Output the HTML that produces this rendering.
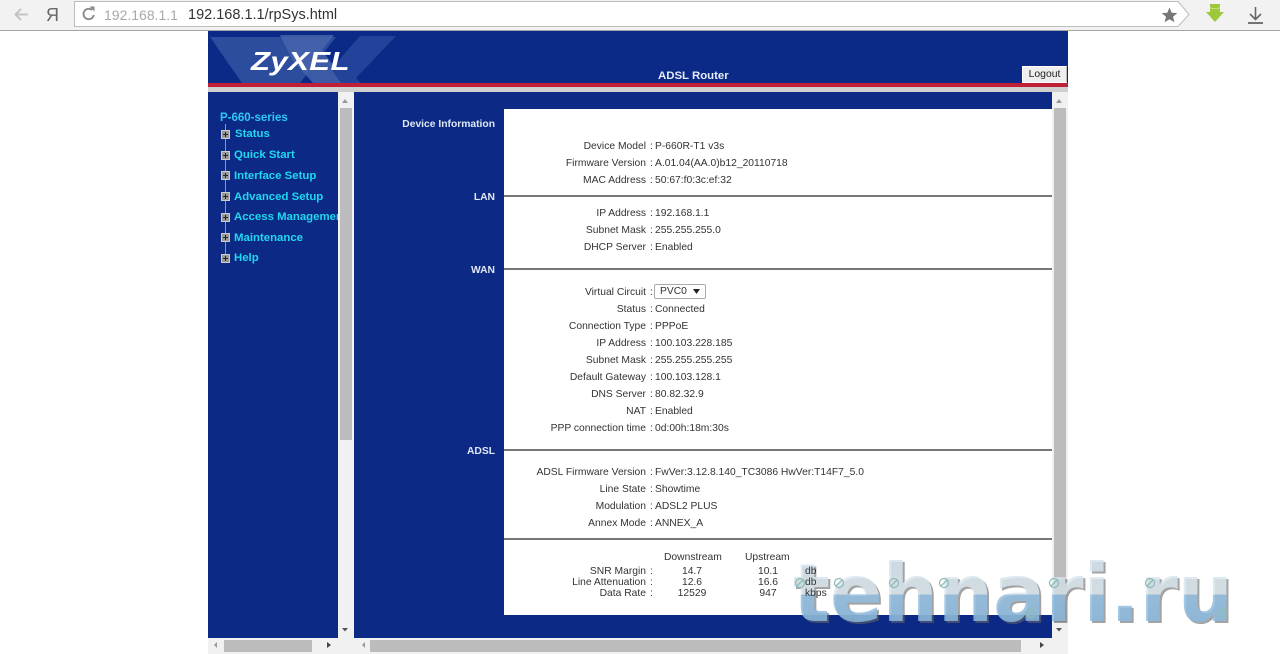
<!DOCTYPE html>
<html><head><meta charset="utf-8">
<style>
html,body{margin:0;padding:0;background:#fff;}
body{width:1280px;height:654px;overflow:hidden;position:relative;font-family:"Liberation Sans",Arial,sans-serif;}
.a{position:absolute;}
.l,.v,.c,.cc{position:absolute;margin-top:1px;font-size:10.3px;line-height:12px;color:#333;white-space:nowrap;}
.l{right:634px;text-align:right;}
.v{left:655px;}
.c{left:650px;}
.cc{text-align:center;}
.s{position:absolute;margin-top:2px;right:785px;font-size:10.3px;line-height:12px;font-weight:bold;color:#dfe6f5;white-space:nowrap;}
.m{position:absolute;margin-top:1px;left:234px;font-size:11.4px;line-height:13px;font-weight:bold;color:#1fd8f0;white-space:nowrap;}
.p{position:absolute;left:221px;width:7px;height:7px;background:#999;border:1px solid #ccc;}
.p:before{content:"";position:absolute;left:1px;top:3px;width:5px;height:1px;background:#222;}
.p:after{content:"";position:absolute;left:3px;top:1px;width:1px;height:5px;background:#222;}
.hr{position:absolute;left:504px;width:548px;height:2px;background:#777;}
</style></head>
<body>
<!-- toolbar -->
<div class="a" style="left:0;top:0;width:1280px;height:30px;background:#f2f2f2;border-bottom:1px solid #a5a5a5;"></div>
<svg class="a" style="left:0;top:0" width="74" height="30"><path d="M28 14.500H16M21 9l-5.500 5.500L21 20" fill="none" stroke="#c4c4c4" stroke-width="2"/></svg>
<div class="a" style="left:46px;top:5px;font-size:18px;line-height:20px;color:#666;">Я</div>
<svg class="a" style="left:70px;top:0" width="1130" height="30"><path d="M4.500 1.500H1108L1119 14.500 1108 26.500H4.500z" fill="#fff" stroke="#bdbdbd"/><path d="M22 10a5.200 5.200 0 1 0 1.800 5" fill="none" stroke="#888" stroke-width="1.800"/><path d="M19.500 6.500h5v5z" fill="#888"/></svg>
<div class="a" style="left:104px;top:7px;font-size:14px;line-height:17px;color:#a8a8a8;">192.168.1.1</div>
<div class="a" style="left:188px;top:7px;font-size:14.500px;line-height:17px;color:#333;">192.168.1.1/rpSys.html</div>
<svg class="a" style="left:1160px;top:6px" width="18" height="18"><path d="M9.500 1.500l2.200 5.200 5.600.4-4.300 3.600 1.400 5.500-4.900-3-4.900 3 1.400-5.500-4.300-3.600 5.600-.4z" fill="#777"/></svg>
<svg class="a" style="left:1203px;top:3px" width="24" height="22"><path d="M7 1h10v3l-1 1h-8l-1-1zM7 6h10v3h4l-9 10-9-10h4z" fill="#9cc83a"/><path d="M7 5.500h10" stroke="#c6e070" stroke-width="1"/></svg>
<svg class="a" style="left:1245px;top:5px" width="22" height="20"><path d="M10.500 2v12M5 9l5.500 5.500L16 9" fill="none" stroke="#666" stroke-width="1.600"/><path d="M3 18h15" stroke="#666" stroke-width="1.800"/></svg>

<!-- header -->
<div class="a" style="left:208px;top:31px;width:860px;height:52px;background:#0b2a87;"></div>
<svg class="a" style="left:208px;top:31px" width="200" height="52"><path d="M2 6H128L92 52H34z" fill="#2c4c9e"/><path d="M72 4h54l-12 15 24 33H105L85 30z" fill="#4a66ae" opacity=".8"/><path d="M152 5h36l-40 42 5 5h-20l-10-14z" fill="#23439a"/></svg>
<div class="a" style="left:251px;top:46px;font-size:26px;line-height:30px;font-weight:bold;font-style:italic;color:#fff;letter-spacing:.3px;transform-origin:0 0;transform:scaleX(1.2);">ZyXEL</div>
<div class="a" style="left:658px;top:70px;font-size:11.400px;line-height:13px;font-weight:bold;color:#e8ecf8;">ADSL Router</div>
<div class="a" style="left:208px;top:83px;width:860px;height:4px;background:#c01f38;"></div>
<div class="a" style="left:208px;top:87px;width:860px;height:5px;background:#cfcfcf;"></div>
<div class="a" style="left:1022px;top:66px;width:45px;height:17px;background:#eee;border:1px solid #fff;border-right-color:#bbb;box-sizing:border-box;font-size:10.400px;line-height:16px;text-align:center;color:#222;">Logout</div>

<!-- left frame -->
<div class="a" style="left:208px;top:92px;width:130px;height:546px;background:#0c2a85;"></div>
<div class="a" style="left:338px;top:92px;width:16px;height:546px;background:#f1f1f1;"></div>
<div class="a" style="left:340px;top:108px;width:12px;height:332px;background:#bcbcbc;"></div>
<div class="a" style="left:208px;top:638px;width:146px;height:16px;background:#f1f1f1;"></div>
<div class="a" style="left:224px;top:640px;width:88px;height:12px;background:#bcbcbc;"></div>
<svg class="a" style="left:208px;top:92px" width="146" height="562">
<path d="M134 11l3-4 3 4z" fill="#999"/><path d="M134 536l3 3.500 3-3.500z" fill="#555"/><path d="M9 550l-3 3 3 3z" fill="#999"/><path d="M119 550l4 3-4 3z" fill="#444"/></svg>

<div class="a" style="left:220px;top:111px;font-size:11.500px;line-height:14px;font-weight:bold;color:#2fc8f5;">P-660-series</div>
<div class="a" style="left:225px;top:124px;width:1px;height:134px;background:#8899bb;"></div>
<div class="p" style="top:130px"></div><div class="m" style="top:127px;left:235px">Status</div>
<div class="p" style="top:151px"></div><div class="m" style="top:148px">Quick Start</div>
<div class="p" style="top:171px"></div><div class="m" style="top:169px">Interface Setup</div>
<div class="p" style="top:192px"></div><div class="m" style="top:190px">Advanced Setup</div>
<div class="p" style="top:213px"></div><div class="a" style="left:234px;top:210px;width:104px;overflow:hidden;height:16px;"><div class="m" style="left:0;top:0">Access Management</div></div>
<div class="p" style="top:233px"></div><div class="m" style="top:231px">Maintenance</div>
<div class="p" style="top:254px"></div><div class="m" style="top:251px">Help</div>

<!-- right frame -->
<div class="a" style="left:354px;top:92px;width:698px;height:546px;background:#0c2a85;"></div>
<div class="a" style="left:1052px;top:92px;width:16px;height:546px;background:#f1f1f1;"></div>
<div class="a" style="left:1054px;top:108px;width:12px;height:514px;background:#bcbcbc;"></div>
<div class="a" style="left:354px;top:638px;width:714px;height:16px;background:#f1f1f1;"></div>
<div class="a" style="left:370px;top:640px;width:651px;height:12px;background:#bcbcbc;"></div>
<svg class="a" style="left:354px;top:92px" width="714" height="562">
<path d="M702 11l3-4 3 4z" fill="#999"/><path d="M702 536l3 3.500 3-3.500z" fill="#555"/><path d="M11 550l-3 3 3 3z" fill="#999"/><path d="M686 550l4 3-4 3z" fill="#444"/></svg>

<div class="a" style="left:504px;top:109px;width:548px;height:506px;background:#fff;"></div>
<div class="hr" style="top:195px"></div>
<div class="hr" style="top:268px"></div>
<div class="hr" style="top:449px"></div>
<div class="hr" style="top:538px"></div>

<div class="s" style="top:117px">Device Information</div>
<div class="s" style="top:190px">LAN</div>
<div class="s" style="top:263px">WAN</div>
<div class="s" style="top:444px">ADSL</div>

<div class="l" style="top:140px">Device Model</div><div class="c" style="top:140px">:</div><div class="v" style="top:140px">P-660R-T1 v3s</div>
<div class="l" style="top:157px">Firmware Version</div><div class="c" style="top:157px">:</div><div class="v" style="top:157px">A.01.04(AA.0)b12_20110718</div>
<div class="l" style="top:174px">MAC Address</div><div class="c" style="top:174px">:</div><div class="v" style="top:174px">50:67:f0:3c:ef:32</div>

<div class="l" style="top:207px">IP Address</div><div class="c" style="top:207px">:</div><div class="v" style="top:207px">192.168.1.1</div>
<div class="l" style="top:224px">Subnet Mask</div><div class="c" style="top:224px">:</div><div class="v" style="top:224px">255.255.255.0</div>
<div class="l" style="top:241px">DHCP Server</div><div class="c" style="top:241px">:</div><div class="v" style="top:241px">Enabled</div>

<div class="l" style="top:286px">Virtual Circuit</div><div class="c" style="top:286px">:</div>
<div class="a" style="left:654px;top:284px;width:52px;height:15px;border:1px solid #aaa;border-radius:2px;box-sizing:border-box;font-size:10.300px;line-height:13px;color:#333;padding-left:5px;background:#fff;">PVC0</div>
<svg class="a" style="left:692px;top:288px" width="10" height="7"><path d="M1 1h7L4.500 6z" fill="#222"/></svg>
<div class="l" style="top:303px">Status</div><div class="c" style="top:303px">:</div><div class="v" style="top:303px">Connected</div>
<div class="l" style="top:320px">Connection Type</div><div class="c" style="top:320px">:</div><div class="v" style="top:320px">PPPoE</div>
<div class="l" style="top:337px">IP Address</div><div class="c" style="top:337px">:</div><div class="v" style="top:337px">100.103.228.185</div>
<div class="l" style="top:354px">Subnet Mask</div><div class="c" style="top:354px">:</div><div class="v" style="top:354px">255.255.255.255</div>
<div class="l" style="top:371px">Default Gateway</div><div class="c" style="top:371px">:</div><div class="v" style="top:371px">100.103.128.1</div>
<div class="l" style="top:388px">DNS Server</div><div class="c" style="top:388px">:</div><div class="v" style="top:388px">80.82.32.9</div>
<div class="l" style="top:405px">NAT</div><div class="c" style="top:405px">:</div><div class="v" style="top:405px">Enabled</div>
<div class="l" style="top:422px">PPP connection time</div><div class="c" style="top:422px">:</div><div class="v" style="top:422px">0d:00h:18m:30s</div>

<div class="l" style="top:466px">ADSL Firmware Version</div><div class="c" style="top:466px">:</div><div class="v" style="top:466px">FwVer:3.12.8.140_TC3086 HwVer:T14F7_5.0</div>
<div class="l" style="top:483px">Line State</div><div class="c" style="top:483px">:</div><div class="v" style="top:483px">Showtime</div>
<div class="l" style="top:500px">Modulation</div><div class="c" style="top:500px">:</div><div class="v" style="top:500px">ADSL2 PLUS</div>
<div class="l" style="top:517px">Annex Mode</div><div class="c" style="top:517px">:</div><div class="v" style="top:517px">ANNEX_A</div>

<div class="cc" style="left:664px;top:551px">Downstream</div>
<div class="cc" style="left:745px;top:551px">Upstream</div>
<div class="l" style="top:565px">SNR Margin</div><div class="c" style="top:565px">:</div>
<div class="l" style="top:576px">Line Attenuation</div><div class="c" style="top:576px">:</div>
<div class="l" style="top:587px">Data Rate</div><div class="c" style="top:587px">:</div>
<div class="cc" style="left:662px;width:60px;top:565px">14.7</div><div class="cc" style="left:738px;width:60px;top:565px">10.1</div>
<div class="cc" style="left:662px;width:60px;top:576px">12.6</div><div class="cc" style="left:738px;width:60px;top:576px">16.6</div>
<div class="cc" style="left:662px;width:60px;top:587px">12529</div><div class="cc" style="left:738px;width:60px;top:587px">947</div>

<!-- watermark -->
<svg class="a" style="left:780px;top:540px" width="470" height="100">
<defs><linearGradient id="g" x1="0" y1="0" x2="0" y2="100" gradientUnits="userSpaceOnUse">
<stop offset="0" stop-color="#cfe0ea"/><stop offset=".54" stop-color="#dbe7ee"/><stop offset=".55" stop-color="#93bfe2"/><stop offset="1" stop-color="#85b5dc"/></linearGradient></defs>
<text x="15" y="83" font-family="'DejaVu Sans',sans-serif" font-weight="bold" font-size="80" textLength="440" lengthAdjust="spacingAndGlyphs" fill="#666" fill-opacity=".6">tehnari.ru</text>
<text x="13" y="81" font-family="'DejaVu Sans',sans-serif" font-weight="bold" font-size="80" textLength="440" lengthAdjust="spacingAndGlyphs" fill="url(#g)" fill-opacity=".85">tehnari.ru</text>
<g fill="none" stroke="#8fbcb8" stroke-width="1.300">
<circle cx="20" cy="43" r="4.500"/><path d="M17 46l6-6"/>
<circle cx="59" cy="43" r="4.500"/><path d="M56 46l6-6"/>
<circle cx="114" cy="43" r="4.500"/><path d="M111 46l6-6"/>
<circle cx="164" cy="43" r="4.500"/><path d="M161 46l6-6"/>
<circle cx="251" cy="73" r="4.500"/><path d="M248 76l6-6"/>
<circle cx="274" cy="43" r="4.500"/><path d="M271 46l6-6"/>
<circle cx="370" cy="43" r="4.500"/><path d="M367 46l6-6"/>
<circle cx="442" cy="73" r="4.500"/><path d="M439 76l6-6"/>
</g>
</svg>
<div class="v" style="left:805px;top:565px">db</div>
<div class="v" style="left:805px;top:576px">db</div>
<div class="v" style="left:805px;top:587px">kbps</div>
</body></html>
